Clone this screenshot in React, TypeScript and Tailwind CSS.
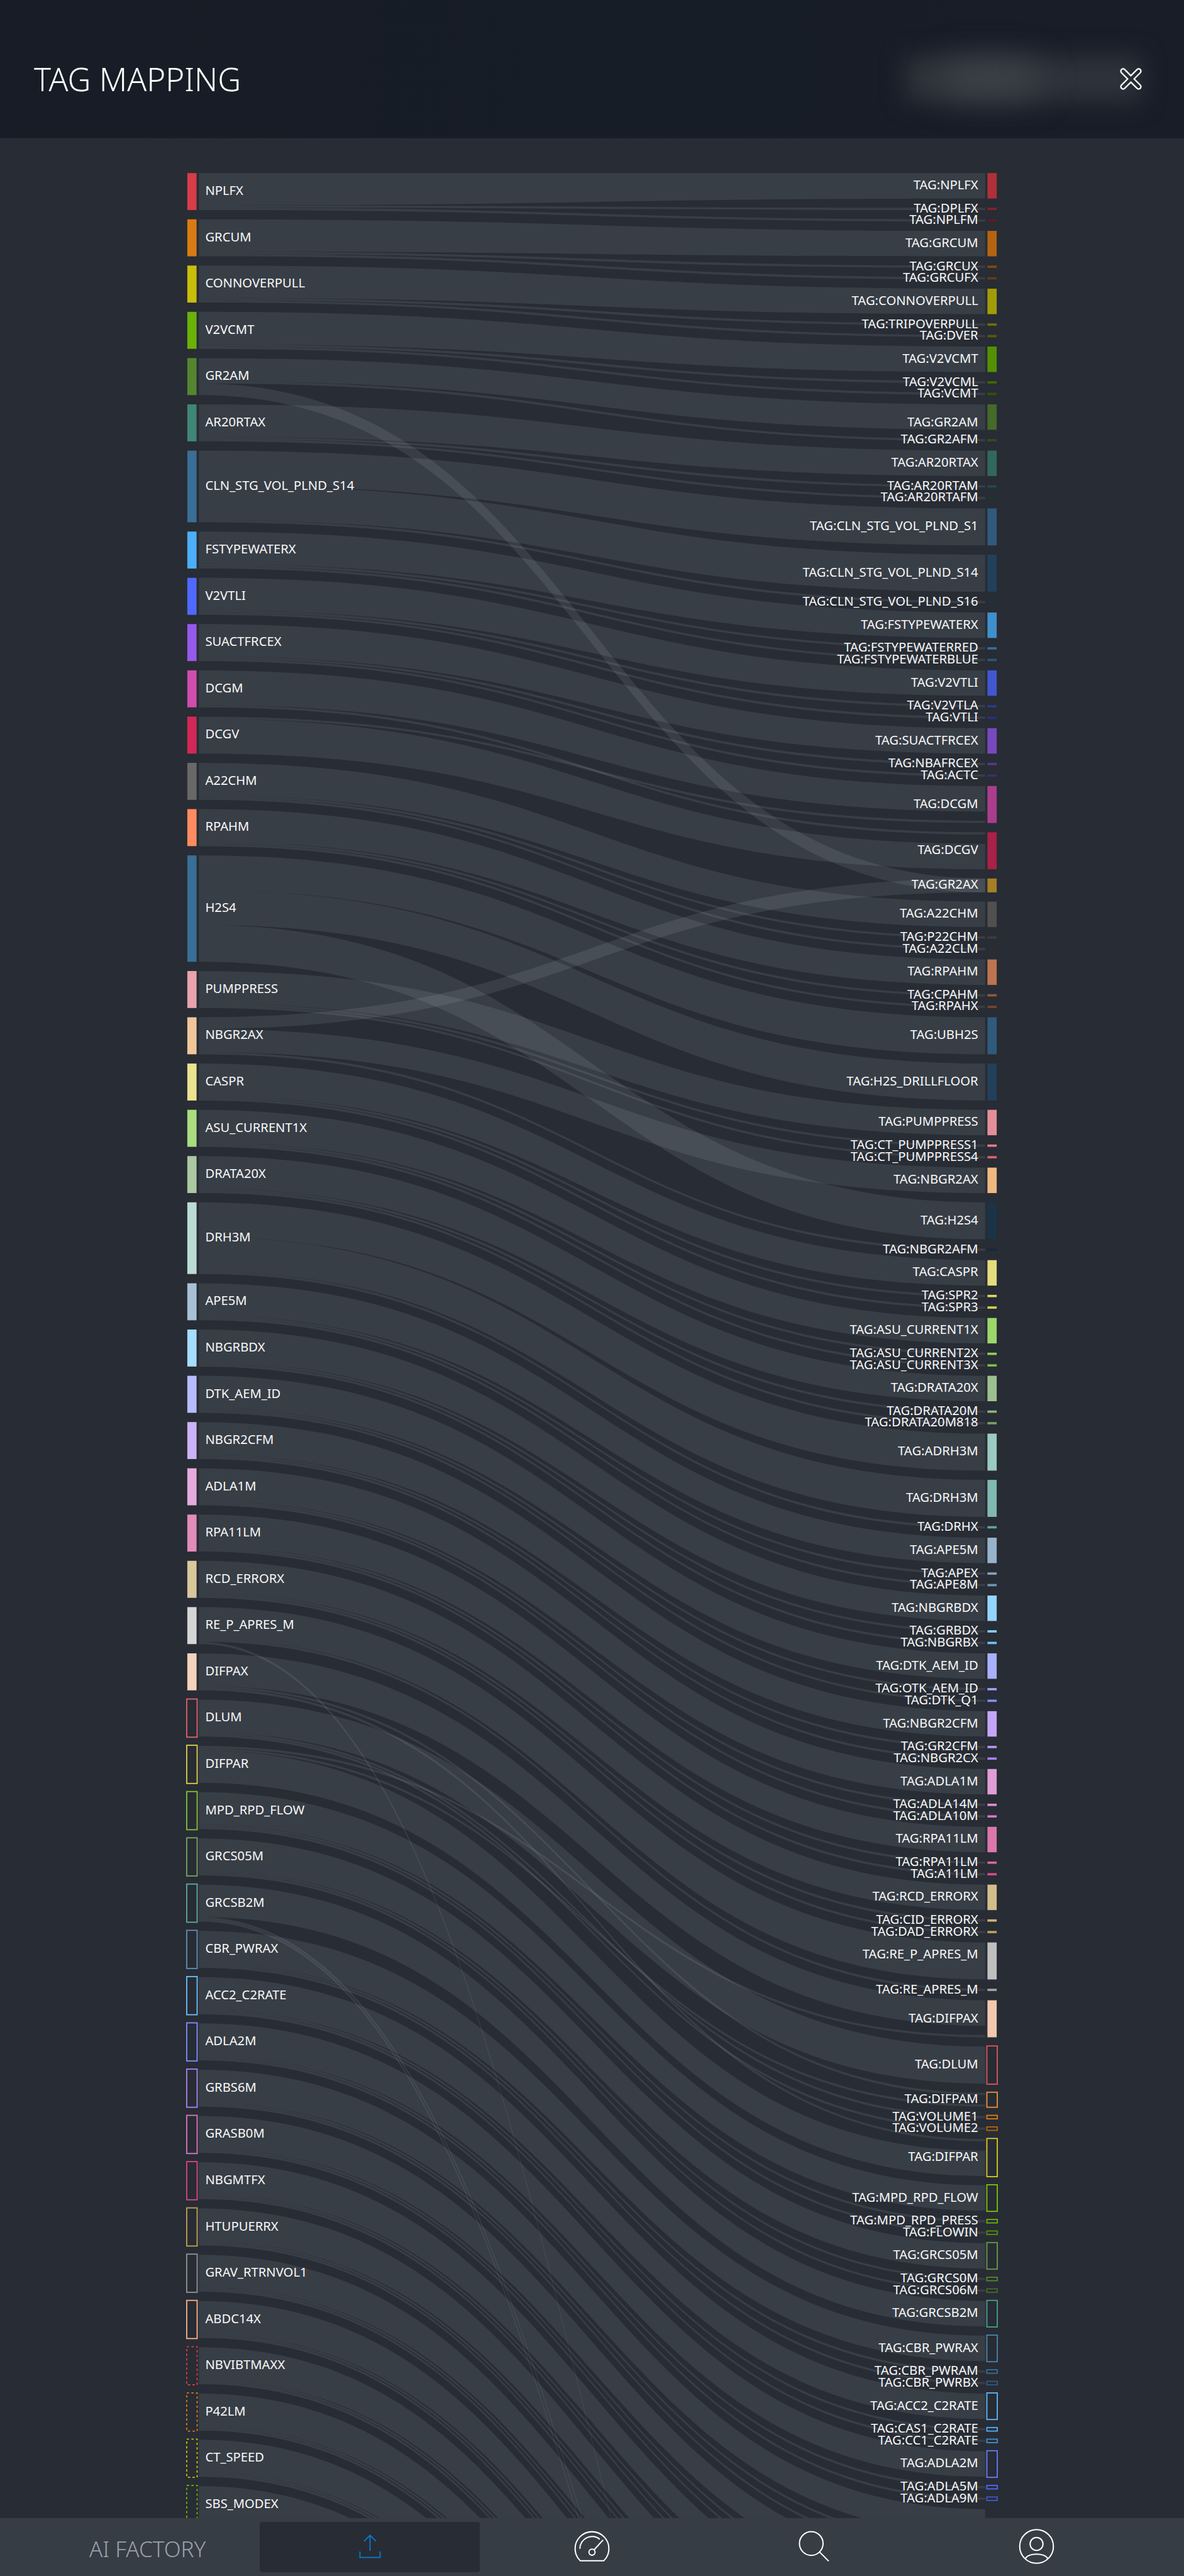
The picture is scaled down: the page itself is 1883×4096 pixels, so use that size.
import React from "react";

type Look = "solid" | "outline" | "dashed";
type Node = { name: string; y: number; h: number; color: string; look?: Look; labelY?: number };
type Link = [fromY: number, fromH: number, toY: number, toH: number];

const PANEL = "#282c34";
const LEFT_X = 324;
const RIGHT_X = 1708;
const LINK_START = 344;
const LINK_END = 1704;

const n = (name: string, y: number, h: number, color: string, look: Look = "solid", labelY?: number): Node => ({
  name, y, h, color, look, labelY,
});

const sources: Node[] = [
  n("NPLFX", 300, 64, "#d83c46"),
  n("GRCUM", 380, 64, "#d97b14"),
  n("CONNOVERPULL", 460, 64, "#c8be0a"),
  n("V2VCMT", 540, 64, "#6ab108"),
  n("GR2AM", 620, 64, "#558530"),
  n("AR20RTAX", 700, 64, "#3f8676"),
  n("CLN_STG_VOL_PLND_S14", 780, 124, "#396e96"),
  n("FSTYPEWATERX", 920, 64, "#4caefa"),
  n("V2VTLI", 1000, 64, "#4f69ff"),
  n("SUACTFRCEX", 1080, 64, "#955ae9"),
  n("DCGM", 1160, 64, "#cf4dad"),
  n("DCGV", 1240, 64, "#d12858"),
  n("A22CHM", 1320, 64, "#686868"),
  n("RPAHM", 1400, 64, "#ff8c5f"),
  n("H2S4", 1480, 184, "#396e96"),
  n("PUMPPRESS", 1680, 64, "#e8a3ac"),
  n("NBGR2AX", 1760, 64, "#f0c698"),
  n("CASPR", 1840, 64, "#eae38f"),
  n("ASU_CURRENT1X", 1920, 64, "#aadd7f"),
  n("DRATA20X", 2000, 64, "#abc8a1"),
  n("DRH3M", 2080, 124, "#badbd3"),
  n("APE5M", 2220, 64, "#a8c0d6"),
  n("NBGRBDX", 2300, 64, "#a5dcff"),
  n("DTK_AEM_ID", 2380, 64, "#b5bcff"),
  n("NBGR2CFM", 2460, 64, "#ccb2f7"),
  n("ADLA1M", 2540, 64, "#e6abdd"),
  n("RPA11LM", 2620, 64, "#e18cb9"),
  n("RCD_ERRORX", 2700, 64, "#d9c89c"),
  n("RE_P_APRES_M", 2780, 64, "#d5d5d5"),
  n("DIFPAX", 2860, 64, "#f5d2bb"),
  n("DLUM", 2940, 64, "#e0606e", "outline"),
  n("DIFPAR", 3020, 64, "#d8d04a", "outline"),
  n("MPD_RPD_FLOW", 3100, 64, "#7fc23a", "outline"),
  n("GRCS05M", 3180, 64, "#76a560", "outline"),
  n("GRCSB2M", 3260, 64, "#5cab9e", "outline"),
  n("CBR_PWRAX", 3340, 64, "#6090b4", "outline"),
  n("ACC2_C2RATE", 3420, 64, "#6bc0fa", "outline"),
  n("ADLA2M", 3500, 64, "#7f8eff", "outline"),
  n("GRBS6M", 3580, 64, "#aa82f0", "outline"),
  n("GRASB0M", 3660, 64, "#dc74c6", "outline"),
  n("NBGMTFX", 3740, 64, "#d84680", "outline"),
  n("HTUPUERRX", 3820, 64, "#bfa253", "outline"),
  n("GRAV_RTRNVOL1", 3900, 64, "#8f9497", "outline"),
  n("ABDC14X", 3980, 64, "#f7b088", "outline"),
  n("NBVIBTMAXX", 4060, 64, "#d83c46", "dashed"),
  n("P42LM", 4140, 64, "#d97b14", "dashed"),
  n("CT_SPEED", 4220, 64, "#c8be0a", "dashed"),
  n("SBS_MODEX", 4300, 64, "#6ab108", "dashed"),
];

const targets: Node[] = [
  n("NPLFX", 300, 44, "#af3038"),
  n("DPLFX", 360, 4, "#7f2429"),
  n("NPLFM", 380, 4, "#5f1c1f"),
  n("GRCUM", 400, 44, "#b46411"),
  n("GRCUX", 460, 4, "#824b10"),
  n("GRCUFX", 480, 4, "#653c10"),
  n("CONNOVERPULL", 500, 44, "#a39c09"),
  n("TRIPOVERPULL", 560, 4, "#757006"),
  n("DVER", 580, 4, "#5c5a06"),
  n("V2VCMT", 600, 44, "#549003"),
  n("V2VCML", 660, 4, "#3f6a04"),
  n("VCMT", 680, 4, "#325403"),
  n("GR2AM", 700, 44, "#456a29", "solid", 730),
  n("GR2AFM", 760, 4, "#324e1e"),
  n("AR20RTAX", 780, 44, "#31685d"),
  n("AR20RTAM", 840, 4, "#254a42"),
  n("AR20RTAFM", 860, 4, "#1b3530"),
  n("CLN_STG_VOL_PLND_S1", 880, 64, "#305a7c"),
  n("CLN_STG_VOL_PLND_S14", 960, 64, "#22405a"),
  n("CLN_STG_VOL_PLND_S16", 1040, 4, "#1b3347"),
  n("FSTYPEWATERX", 1060, 44, "#408fcd"),
  n("FSTYPEWATERRED", 1120, 4, "#336f9d"),
  n("FSTYPEWATERBLUE", 1140, 4, "#29587c"),
  n("V2VTLI", 1160, 44, "#4157d2"),
  n("V2VTLA", 1220, 4, "#2b3a8f"),
  n("VTLI", 1240, 4, "#27317d"),
  n("SUACTFRCEX", 1260, 44, "#7849be"),
  n("NBAFRCEX", 1320, 4, "#573891"),
  n("ACTC", 1340, 4, "#422c6a"),
  n("DCGM", 1360, 64, "#a93e8e"),
  n("DCGV", 1440, 64, "#a82148"),
  n("GR2AX", 1520, 24, "#a67e25"),
  n("A22CHM", 1560, 44, "#505050"),
  n("P22CHM", 1620, 4, "#3c3c3c"),
  n("A22CLM", 1640, 4, "#2d2d2d"),
  n("RPAHM", 1660, 44, "#bd7450"),
  n("CPAHM", 1720, 4, "#915a3c"),
  n("RPAHX", 1740, 4, "#744530"),
  n("UBH2S", 1760, 64, "#305a7c"),
  n("H2S_DRILLFLOOR", 1840, 64, "#22405a"),
  n("PUMPPRESS", 1920, 44, "#e38f9a"),
  n("CT_PUMPPRESS1", 1980, 4, "#e07f88"),
  n("CT_PUMPPRESS4", 2000, 4, "#dd6270"),
  n("NBGR2AX", 2020, 44, "#edb981"),
  n("H2S4", 2080, 64, "#1b3347"),
  n("NBGR2AFM", 2160, 4, "#16293a"),
  n("CASPR", 2180, 44, "#e4dc7e"),
  n("SPR2", 2240, 4, "#e0d868"),
  n("SPR3", 2260, 4, "#d8cf4a"),
  n("ASU_CURRENT1X", 2280, 44, "#9cd76a"),
  n("ASU_CURRENT2X", 2340, 4, "#8fd157"),
  n("ASU_CURRENT3X", 2360, 4, "#7cc43a"),
  n("DRATA20X", 2380, 44, "#9cc08f"),
  n("DRATA20M", 2440, 4, "#8fb582"),
  n("DRATA20M818", 2460, 4, "#76a267"),
  n("ADRH3M", 2480, 64, "#9bcac2"),
  n("DRH3M", 2560, 64, "#7fb9b0"),
  n("DRHX", 2640, 4, "#5fa79a"),
  n("APE5M", 2660, 44, "#97b3cc"),
  n("APEX", 2720, 4, "#84a3c0"),
  n("APE8M", 2740, 4, "#6f95b4"),
  n("NBGRBDX", 2760, 44, "#94d5ff"),
  n("GRBDX", 2820, 4, "#88cffc"),
  n("NBGRBX", 2840, 4, "#6fc2fa"),
  n("DTK_AEM_ID", 2860, 44, "#a8b0ff"),
  n("OTK_AEM_ID", 2920, 4, "#97a2ff"),
  n("DTK_Q1", 2940, 4, "#8090ff"),
  n("NBGR2CFM", 2960, 44, "#c3a6f7"),
  n("GR2CFM", 3020, 4, "#b596f3"),
  n("NBGR2CX", 3040, 4, "#a883ec"),
  n("ADLA1M", 3060, 44, "#e09dd6"),
  n("ADLA14M", 3120, 4, "#dd90d0"),
  n("ADLA10M", 3140, 4, "#da78c8"),
  n("RPA11LM", 3160, 44, "#dc77ac"),
  n("RPA11LM", 3220, 4, "#d966a0"),
  n("A11LM", 3240, 4, "#d74a88"),
  n("RCD_ERRORX", 3260, 44, "#d3be8b"),
  n("CID_ERRORX", 3320, 4, "#ccb478"),
  n("DAD_ERRORX", 3340, 4, "#bba258"),
  n("RE_P_APRES_M", 3360, 64, "#bfbfbf", "solid", 3380),
  n("RE_APRES_M", 3440, 4, "#a3a3a3"),
  n("DIFPAX", 3460, 64, "#f2c9ae"),
  n("DLUM", 3540, 64, "#dc5562", "outline"),
  n("DIFPAM", 3620, 24, "#e39237", "outline"),
  n("VOLUME1", 3660, 4, "#d97b14", "outline"),
  n("VOLUME2", 3680, 4, "#b46411", "outline"),
  n("DIFPAR", 3700, 64, "#d2cb28", "outline"),
  n("MPD_RPD_FLOW", 3780, 44, "#78c20c", "outline"),
  n("MPD_RPD_PRESS", 3840, 4, "#6ab108", "outline"),
  n("FLOWIN", 3860, 4, "#549003", "outline"),
  n("GRCS05M", 3880, 44, "#67994a", "outline"),
  n("GRCS0M", 3940, 4, "#558530", "outline"),
  n("GRCS06M", 3960, 4, "#456a29", "outline"),
  n("GRCSB2M", 3980, 44, "#46a08d", "outline"),
  n("CBR_PWRAX", 4040, 44, "#4c82ac", "outline"),
  n("CBR_PWRAM", 4100, 4, "#396e96", "outline"),
  n("CBR_PWRBX", 4120, 4, "#305a7c", "outline"),
  n("ACC2_C2RATE", 4140, 44, "#5ab8fb", "outline"),
  n("CAS1_C2RATE", 4200, 4, "#4caefa", "outline"),
  n("CC1_C2RATE", 4220, 4, "#408fcd", "outline"),
  n("ADLA2M", 4240, 44, "#6479ff", "outline"),
  n("ADLA5M", 4300, 4, "#4f69ff", "outline"),
  n("ADLA9M", 4320, 4, "#4157d2", "outline"),
];

/* A source with one main tag and two minor ones below it. */
const triple = (from: number, to: number): Link[] => [
  [from, 56, to, 44],
  [from + 56, 4, to + 60, 4],
  [from + 60, 4, to + 80, 4],
];

const triples: [number, number][] = [
  [300, 300], [380, 400], [460, 500], [540, 600], [700, 780],
  [920, 1060], [1000, 1160], [1080, 1260], [1320, 1560], [1400, 1660],
  [1680, 1920], [1840, 2180], [1920, 2280], [2000, 2380],
  [2220, 2660], [2300, 2760], [2380, 2860], [2460, 2960], [2540, 3060],
  [2620, 3160], [2700, 3260], [3100, 3780], [3180, 3880], [3340, 4040],
  [3420, 4140], [3500, 4240], [3580, 4340], [3660, 4440], [3740, 4540],
  [3820, 4640], [3900, 4740], [3980, 4840], [4060, 4940], [4140, 5040],
  [4220, 5140], [4300, 5240],
];

const links: Link[] = [
  ...triples.flatMap(([from, to]) => triple(from, to)),
  [620, 40, 700, 44], [660, 4, 760, 4], [664, 20, 1520, 24],
  [780, 60, 880, 64], [840, 60, 960, 64], [900, 4, 1040, 4],
  [1160, 60, 1360, 44], [1220, 4, 1440, 4],
  [1240, 4, 1420, 4], [1244, 60, 1460, 44],
  [1480, 60, 1760, 64], [1540, 60, 1840, 64], [1600, 64, 2080, 64],
  [1760, 20, 1520, 24], [1780, 40, 2020, 44], [1820, 4, 2160, 4],
  [2080, 60, 2480, 64], [2140, 60, 2560, 64], [2200, 4, 2640, 4],
  [2780, 56, 3360, 64], [2836, 4, 3440, 4], [2840, 4, 5600, 4],
  [2860, 56, 3460, 44], [2916, 4, 3620, 4], [2920, 4, 3700, 4],
  [2940, 56, 3540, 64], [2996, 4, 3660, 4], [3000, 4, 3680, 4],
  [3020, 4, 3520, 4], [3024, 4, 3640, 4], [3028, 56, 3720, 44],
  [3260, 56, 3980, 44], [3316, 4, 5500, 4], [3320, 4, 5540, 4],
];

function ribbon([y0, h0, y1, h1]: Link): string {
  const mid = (LINK_START + LINK_END) / 2;
  return `M${LINK_START} ${y0}C${mid} ${y0} ${mid} ${y1} ${LINK_END} ${y1}V${y1 + h1}C${mid} ${y1 + h1} ${mid} ${y0 + h0} ${LINK_START} ${y0 + h0}Z`;
}

function Bar({ node, x }: { node: Node; x: number }) {
  if (node.look === "solid") {
    return <rect x={x} y={node.y} width={16} height={node.h} fill={node.color} />;
  }
  return (
    <rect
      x={x - 1}
      y={node.y - 1}
      width={18}
      height={node.h + 2}
      fill={PANEL}
      stroke={node.color}
      strokeWidth={2}
      strokeDasharray={node.look === "dashed" ? "4 4" : undefined}
    />
  );
}

const baseline = (node: Node) => (node.labelY ?? node.y + node.h / 2 - 2) + 8;

function TagSankey() {
  return (
    <svg
      role="img"
      aria-label="Mapping of source channels to tags"
      viewBox="0 240 2048 4116"
      preserveAspectRatio="xMidYMin slice"
      className="block h-full w-full"
    >
      <g fill="rgb(205,224,234)" fillOpacity={0.1}>
        {links.map((link, i) => (
          <path key={i} d={ribbon(link)} />
        ))}
      </g>
      {sources.map((s) => <Bar key={s.y} node={s} x={LEFT_X} />)}
      {targets.map((t) => <Bar key={t.y} node={t} x={RIGHT_X} />)}
      <g fill="#f8f9fa" fontSize={22}>
        {sources.map((s) => (
          <text key={s.y} x={355} y={baseline(s)}>{s.name}</text>
        ))}
        {targets.map((t) => (
          <text key={t.y} x={1692} y={baseline(t)} textAnchor="end">{`TAG:${t.name}`}</text>
        ))}
      </g>
    </svg>
  );
}

function Icon({ children }: { children: React.ReactNode }) {
  return (
    <svg viewBox="0 0 60 60" aria-hidden="true" className="size-[55px] overflow-visible" fill="none" stroke="currentColor" strokeWidth={2.2}>
      {children}
    </svg>
  );
}

function NavButton({ label, active, children }: { label: string; active?: boolean; children: React.ReactNode }) {
  return (
    <button
      type="button"
      aria-label={label}
      className={
        active
          ? "flex items-center justify-center rounded bg-[#282c34] text-[#0b75c5]"
          : "flex items-center justify-center rounded text-white"
      }
    >
      {children}
    </button>
  );
}

export default function App() {
  return (
    <div className="flex h-screen flex-col overflow-hidden bg-[#282c34] font-['Noto_Sans',sans-serif] text-white">
      <header className="flex h-[220px] shrink-0 items-center justify-between border-b-2 border-[#1b1f2b] bg-linear-to-r from-[#181c26] via-[#161d26] to-[#191d28] pt-8 pr-14 pl-[54px]">
        <h1 className="text-[51px] leading-none font-light">TAG MAPPING</h1>
        <div className="relative mr-3 flex w-[376px] justify-end">
          <div className="absolute -inset-y-5 right-0 left-0 bg-[#2d333a] blur-[18px]" />
          <div className="absolute -inset-y-2 left-16 w-36 bg-[#41454c] blur-[28px]" />
          <button type="button" aria-label="Close" className="relative">
            <svg viewBox="0 0 36 36" className="size-[33px] overflow-visible" fill="none" stroke="currentColor" strokeWidth={2.5} aria-hidden="true">
              <path
                transform="rotate(45 18 18)"
                d="M14 -1a4 4 0 0 1 8 0V14H37a4 4 0 0 1 0 8H22V37a4 4 0 0 1 -8 0V22H-1a4 4 0 0 1 0 -8H14Z"
              />
            </svg>
          </button>
        </div>
      </header>

      <main className="min-h-0 flex-1">
        <TagSankey />
      </main>

      <nav className="grid h-[92px] shrink-0 grid-cols-5 gap-1 bg-[#373d45] px-[60px] py-1.5">
        <a href="#" className="flex items-center justify-center pt-1 text-[35px] leading-none font-light text-[#9aa1ad]">AI FACTORY</a>
        <NavButton label="Upload" active>
          <Icon>
            <path d="M30 9V36M19.5 19.5L30 9L40.5 19.5M12.5 37V47.5H47.5V37" />
          </Icon>
        </NavButton>
        <NavButton label="Dashboard">
          <Icon>
            <path d="M9.7 53.3A29.3 29.3 0 1 1 50.3 53.3Z" strokeLinejoin="round" />
            <path d="M9 32.5A21 21 0 0 1 43.5 16M33.5 34.4L49.3 17" />
            <circle cx={30} cy={38.3} r={5.3} />
          </Icon>
        </NavButton>
        <NavButton label="Search">
          <Icon>
            <circle cx={25.3} cy={23.3} r={20.5} />
            <path d="M40 38.3L55 53.3" strokeLinecap="round" />
          </Icon>
        </NavButton>
        <NavButton label="Account">
          <Icon>
            <circle cx={30} cy={28.3} r={29.2} />
            <circle cx={30} cy={24} r={11.2} />
            <path d="M10.5 49.5C16 39 44 39 49.5 49.5" />
          </Icon>
        </NavButton>
      </nav>
    </div>
  );
}
